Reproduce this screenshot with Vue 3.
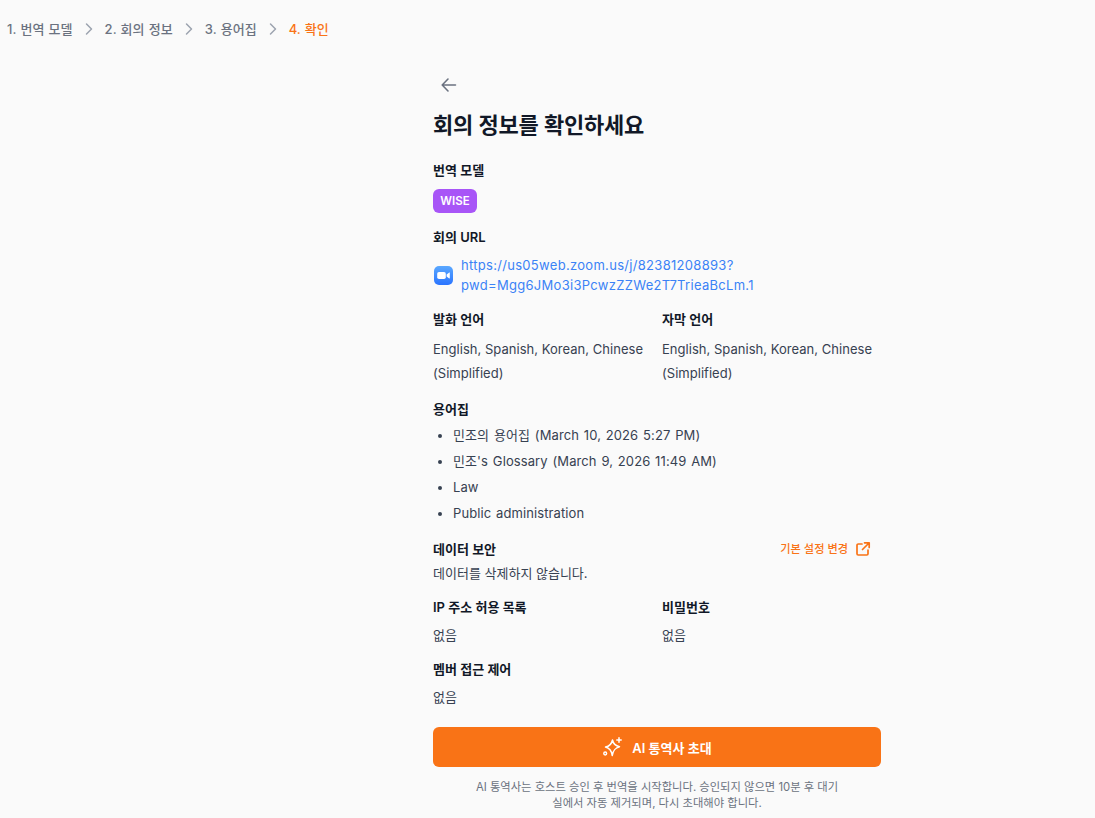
<script setup>
const steps = ['1. 번역 모델', '2. 회의 정보', '3. 용어집']
const glossaries = ['민조의 용어집 (March 10, 2026 5:27 PM)', "민조's Glossary (March 9, 2026 11:49 AM)", 'Law', 'Public administration']
</script>

<template>
  <div class="page">
    <nav class="crumbs">
      <template v-for="s in steps" :key="s">
        <span class="crumb">{{ s }}</span>
        <svg class="chev" width="20" height="20" viewBox="0 0 20 20" fill="none" stroke="#9ca3af" stroke-width="1.5" stroke-linecap="round" stroke-linejoin="round"><path d="M7.500 5l5 5-5 5"/></svg>
      </template>
      <span class="crumb active">4. 확인</span>
    </nav>

    <main class="col">
      <button class="back" aria-label="back">
        <svg width="20" height="20" viewBox="0 0 20 20" fill="none" stroke="#6b7280" stroke-width="1.6" stroke-linecap="round" stroke-linejoin="round"><path d="M16.500 10h-13M9 4 3.200 10 9 16"/></svg>
      </button>
      <h1>회의 정보를 확인하세요</h1>

      <h2 class="l1">번역 모델</h2>
      <div class="badge">WISE</div>

      <h2 class="l2">회의 URL</h2>
      <div class="url">
        <svg class="zoom" width="19" height="19" viewBox="0 0 19 19">
          <defs><linearGradient id="zg" x1="0" y1="0" x2="0" y2="1"><stop offset="0" stop-color="#5aa8ff"/><stop offset="1" stop-color="#2a74ff"/></linearGradient></defs>
          <rect width="19" height="19" rx="5" fill="url(#zg)"/>
          <rect x="3.200" y="6" width="8.600" height="7" rx="1.800" fill="#fff"/>
          <path d="M12.600 8.600 15.200 6.600c.3-.2.6 0 .6.3v5.200c0 .3-.3.5-.6.3l-2.600-2z" fill="#fff"/>
        </svg>
        <a>https://us05web.zoom.us/j/82381208893?<br>pwd=Mgg6JMo3i3PcwzZZWe2T7TrieaBcLm.1</a>
      </div>

      <div class="two langs">
        <div>
          <h2>발화 언어</h2>
          <p class="val">English, Spanish, Korean, Chinese (Simplified)</p>
        </div>
        <div>
          <h2>자막 언어</h2>
          <p class="val">English, Spanish, Korean, Chinese (Simplified)</p>
        </div>
      </div>

      <h2 class="l3">용어집</h2>
      <ul>
        <li v-for="g in glossaries" :key="g">{{ g }}</li>
      </ul>

      <div class="sec-head">
        <h2>데이터 보안</h2>
        <a class="settings">
          기본 설정 변경
          <svg width="16" height="16" viewBox="0 0 16 16" fill="none" stroke="#f97316" stroke-width="1.7" stroke-linecap="round" stroke-linejoin="round"><path d="M7 3H3.200C2.500 3 2 3.500 2 4.200v8.600c0 .7.5 1.200 1.200 1.200h8.600c.7 0 1.200-.5 1.200-1.200V9M9.500 1.800h4.700v4.700M14 2 7.500 8.500"/></svg>
        </a>
      </div>
      <p class="plain">데이터를 삭제하지 않습니다.</p>

      <div class="two ip">
        <div>
          <h2>IP 주소 허용 목록</h2>
          <p class="none">없음</p>
        </div>
        <div>
          <h2>비밀번호</h2>
          <p class="none">없음</p>
        </div>
      </div>

      <h2 class="l4">멤버 접근 제어</h2>
      <p class="none">없음</p>

      <button class="cta">
        <svg width="22" height="22" viewBox="0 0 22 22" fill="none" stroke="#fff" stroke-width="1.500" stroke-linecap="round" stroke-linejoin="round">
          <path d="M10.500 4c.7 3.800 2.600 5.700 7 6.700-4.200 1.100-6.100 3-7.300 8.800-.7-5-2.700-7.400-6.700-8.400 4.300-1 6.200-3.200 7-7.100z"/>
          <path d="M17 1.800v4.400M14.800 4h4.400"/>
          <circle cx="3.200" cy="17.500" r="1.400"/>
        </svg>
        <span>AI 통역사 초대</span>
      </button>
      <p class="note">AI 통역사는 호스트 승인 후 번역을 시작합니다. 승인되지 않으면 10분 후 대기실에서 자동 제거되며, 다시 초대해야 합니다.</p>
    </main>
  </div>
</template>

<style>
html, body { margin: 0; background: #fafafa; }
</style>

<style scoped>
* { box-sizing: border-box; }
.page {
  height: 818px;
  overflow: hidden;
  background: #fafafa;
  font-family: Inter, "Noto Sans CJK KR", sans-serif;
  font-size: 13px;
  color: #1f2937;
}
.crumbs {
  display: flex;
  align-items: center;
  gap: 6px;
  height: 58px;
  padding-left: 7px;
}
.crumb { color: #6b7280; font-weight: 500; font-size: 13px; line-height: 20px; letter-spacing: 0.05px; word-spacing: 0.6px; }
.crumb.active { color: #f97316; }
.col {
  width: 448px;
  margin-left: 433px;
  padding-top: 11px;
}
.back {
  display: flex;
  align-items: center;
  justify-content: center;
  width: 32px;
  height: 32px;
  padding: 0;
  border: 0;
  background: transparent;
}
h1 {
  margin: 8px 0 0;
  font-size: 22px;
  line-height: 32px;
  font-weight: 600;
  letter-spacing: -0.2px;
  color: #111827;
}
h2 {
  margin: 0;
  font-size: 13px;
  line-height: 20px;
  font-weight: 600;
  color: #111827;
}
p { margin: 0; }
.l1 { margin-top: 19px; }
.badge {
  display: flex;
  justify-content: center;
  width: 44px;
  height: 24px;
  margin-top: 9px;
  border-radius: 6px;
  background: #a855f7;
  color: #fff;
  font-size: 11.500px;
  line-height: 24px;
  font-weight: 600;
}
.l2 { margin-top: 14px; }
.url {
  display: flex;
  align-items: center;
  gap: 9px;
  margin-top: 8px;
}
.url a {
  color: #3b82f6;
  line-height: 20px;
  letter-spacing: 0.3px;
  white-space: nowrap;
}
.zoom { flex: none; margin-left: 1px; margin-right: -1px; }
.two {
  display: grid;
  grid-template-columns: 1fr 1fr;
  column-gap: 10px;
}
.langs { margin-top: 14px; }
.val {
  margin-top: 8px;
  line-height: 24px;
  letter-spacing: 0.03px;
  color: #374151;
}
.l3 { margin-top: 14px; }
ul {
  margin: 3px 0 0;
  padding-left: 20px;
}
li {
  line-height: 26px;
  letter-spacing: 0.1px;
  word-spacing: 1px;
  color: #374151;
}
.sec-head {
  display: flex;
  justify-content: space-between;
  align-items: center;
  margin-top: 13px;
  height: 20px;
}
.settings {
  display: flex;
  align-items: center;
  gap: 7px;
  padding-right: 10px;
  color: #f97316;
  font-size: 11.200px;
  font-weight: 500;
  line-height: 16px;
}
.plain {
  margin-top: 4px;
  line-height: 20px;
  color: #374151;
}
.ip { margin-top: 14px; }
.none {
  margin-top: 8px;
  line-height: 20px;
  color: #374151;
}
.l4 { margin-top: 14px; }
.cta {
  display: flex;
  align-items: center;
  justify-content: center;
  gap: 8px;
  width: 100%;
  height: 40px;
  margin-top: 20px;
  border: 0;
  border-radius: 6px;
  background: #f97316;
  color: #fff;
  font-family: inherit;
  font-size: 13px;
  font-weight: 600;
}
.note {
  width: 372px;
  margin: 12px auto 0;
  text-align: center;
  font-size: 11.300px;
  line-height: 16px;
  color: #6b7280;
}
</style>
